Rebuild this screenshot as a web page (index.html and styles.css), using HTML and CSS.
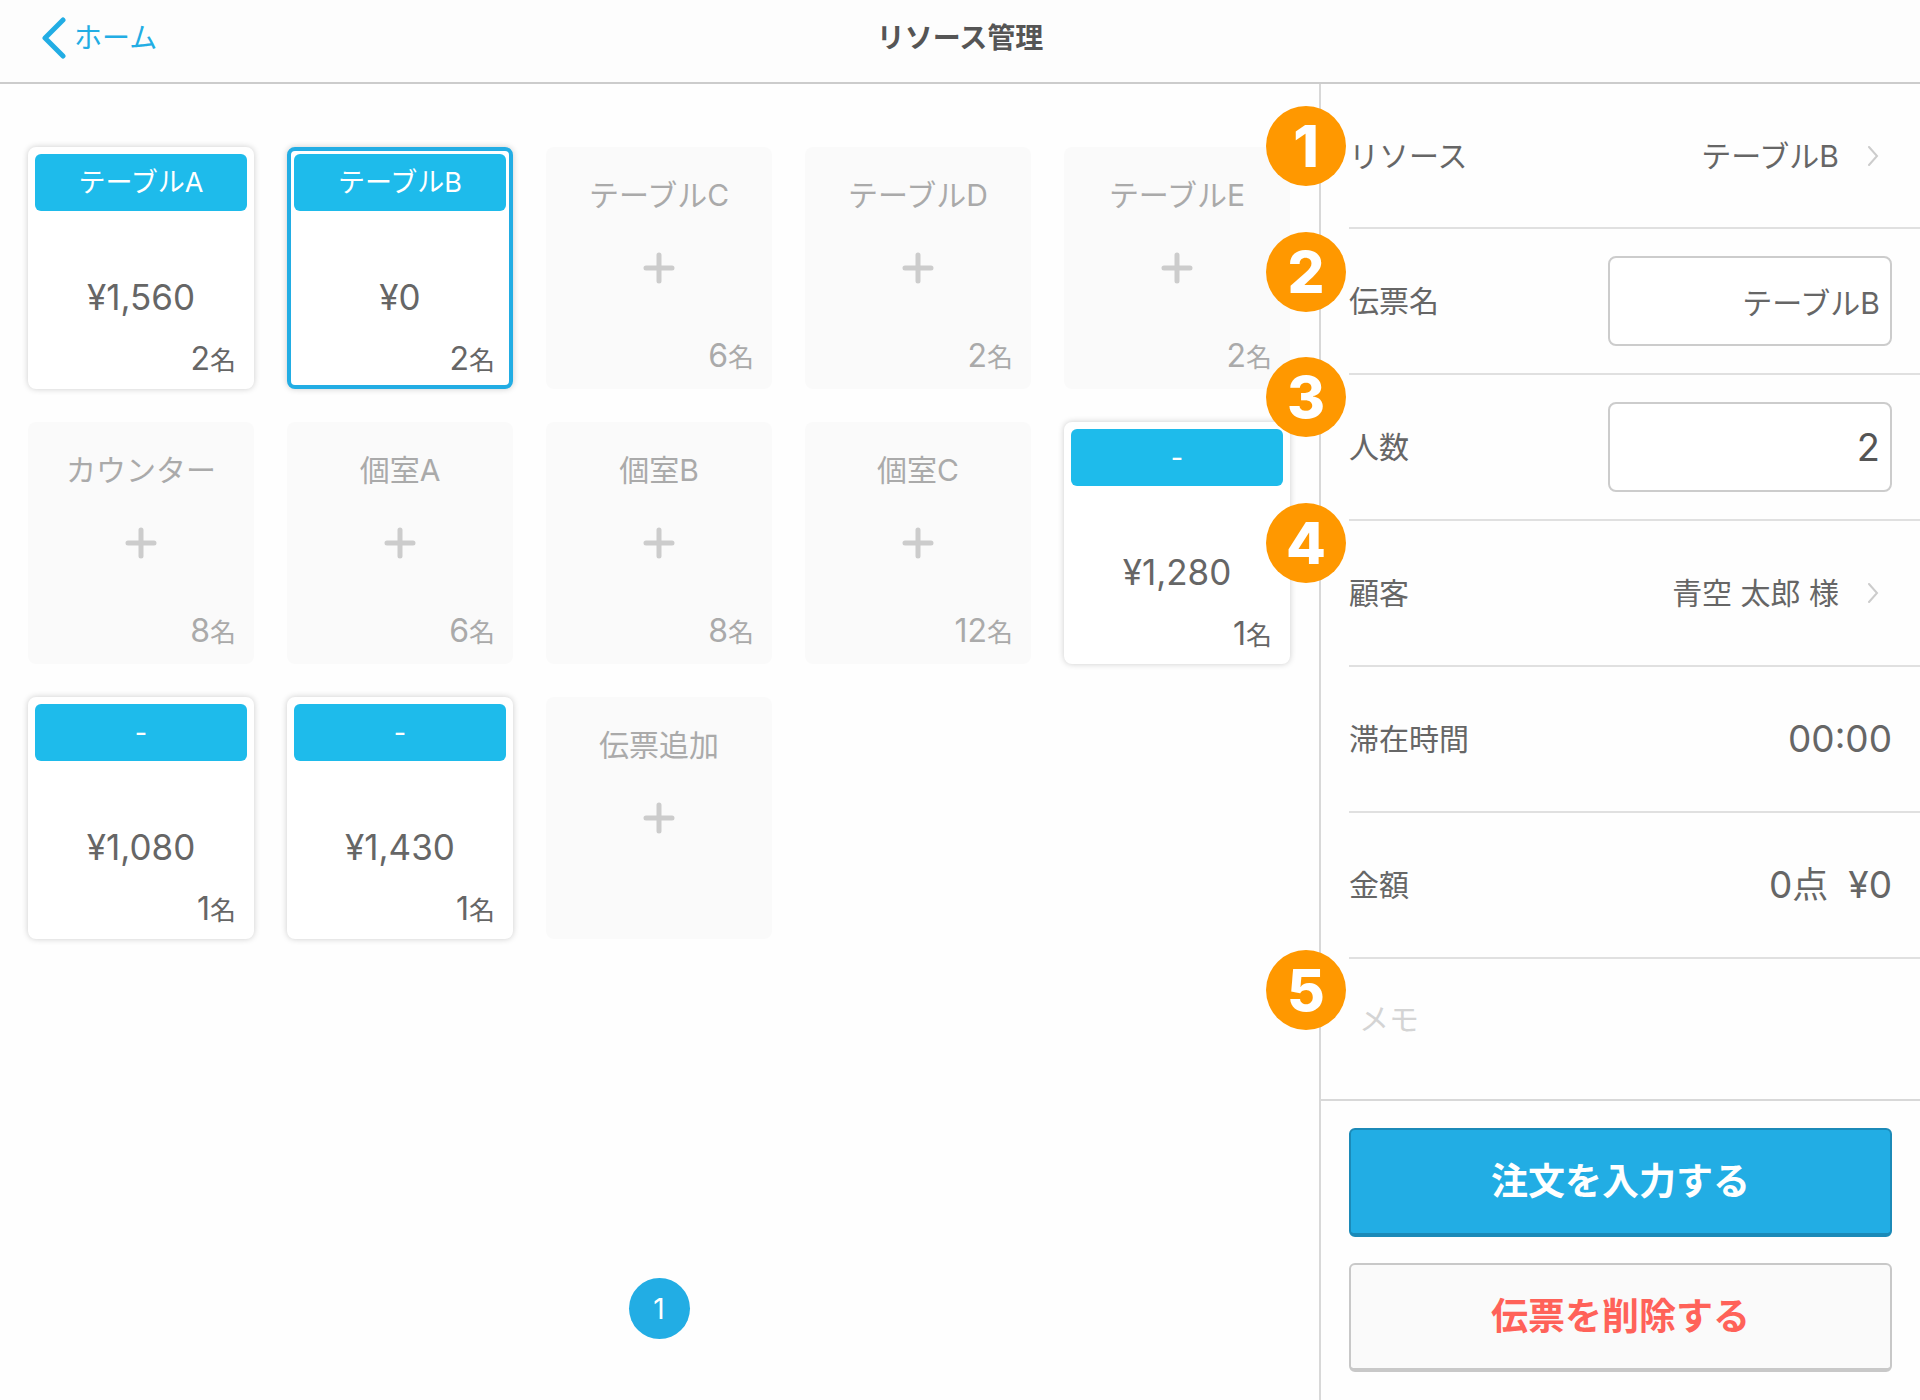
FILE: index.html
```html
<!DOCTYPE html>
<html lang="ja">
<head>
    <meta charset="UTF-8">
    <meta name="viewport" content="width=device-width, initial-scale=1.0">
    <title>リソース管理</title>
    <link rel="stylesheet" href="styles.css">
</head>
<body>

    <svg class="sprite" aria-hidden="true">
        <symbol id="plus" viewBox="0 0 32 32">
            <path d="M16 3v26M3 16h26" fill="none" stroke="currentColor" stroke-width="5" stroke-linecap="round"/>
        </symbol>
        <symbol id="chevron" viewBox="0 0 12 20">
            <path d="M2 1l8 9-8 9" fill="none" stroke="currentColor" stroke-width="2" stroke-linecap="round"/>
        </symbol>
    </svg>

    <header class="header">
        <a class="back" href="#">
            <svg class="back-icon" viewBox="0 0 24 42" aria-hidden="true">
                <path d="M21 3L3 21l18 18" fill="none" stroke="currentColor" stroke-width="5" stroke-linecap="round" stroke-linejoin="round"/>
            </svg>
            <span>ホーム</span>
        </a>
        <h1>リソース管理</h1>
    </header>

    <div class="content">
        <!-- Tables and open slips -->
        <main class="resources">
            <div class="grid">
                <button type="button" class="card open">
                    <span class="tag">テーブルA</span>
                    <span class="amount">¥1,560</span>
                    <span class="count">2<small>名</small></span>
                </button>
                <button type="button" class="card open selected">
                    <span class="tag">テーブルB</span>
                    <span class="amount">¥0</span>
                    <span class="count">2<small>名</small></span>
                </button>
                <button type="button" class="card">
                    <span class="name">テーブルC</span>
                    <svg class="plus"><use href="#plus"/></svg>
                    <span class="count">6<small>名</small></span>
                </button>
                <button type="button" class="card">
                    <span class="name">テーブルD</span>
                    <svg class="plus"><use href="#plus"/></svg>
                    <span class="count">2<small>名</small></span>
                </button>
                <button type="button" class="card">
                    <span class="name">テーブルE</span>
                    <svg class="plus"><use href="#plus"/></svg>
                    <span class="count">2<small>名</small></span>
                </button>
                <button type="button" class="card">
                    <span class="name">カウンター</span>
                    <svg class="plus"><use href="#plus"/></svg>
                    <span class="count">8<small>名</small></span>
                </button>
                <button type="button" class="card">
                    <span class="name">個室A</span>
                    <svg class="plus"><use href="#plus"/></svg>
                    <span class="count">6<small>名</small></span>
                </button>
                <button type="button" class="card">
                    <span class="name">個室B</span>
                    <svg class="plus"><use href="#plus"/></svg>
                    <span class="count">8<small>名</small></span>
                </button>
                <button type="button" class="card">
                    <span class="name">個室C</span>
                    <svg class="plus"><use href="#plus"/></svg>
                    <span class="count">12<small>名</small></span>
                </button>
                <button type="button" class="card open">
                    <span class="tag">-</span>
                    <span class="amount">¥1,280</span>
                    <span class="count">1<small>名</small></span>
                </button>
                <button type="button" class="card open">
                    <span class="tag">-</span>
                    <span class="amount">¥1,080</span>
                    <span class="count">1<small>名</small></span>
                </button>
                <button type="button" class="card open">
                    <span class="tag">-</span>
                    <span class="amount">¥1,430</span>
                    <span class="count">1<small>名</small></span>
                </button>
                <button type="button" class="card">
                    <span class="name">伝票追加</span>
                    <svg class="plus"><use href="#plus"/></svg>
                </button>
            </div>
            <nav class="pager">
                <button type="button" class="page">1</button>
            </nav>
        </main>

        <!-- Details of the selected slip -->
        <aside class="detail">
            <div class="row">
                <span class="step step-1">1</span>
                <span class="label" id="resource-label">リソース</span>
                <button type="button" class="picker" aria-describedby="resource-label">
                    テーブルB
                    <svg class="chevron"><use href="#chevron"/></svg>
                </button>
            </div>
            <div class="row">
                <span class="step step-2">2</span>
                <label class="label" for="slip-name">伝票名</label>
                <input type="text" id="slip-name" value="テーブルB">
            </div>
            <div class="row">
                <span class="step step-3">3</span>
                <label class="label" for="people">人数</label>
                <input type="text" id="people" class="number" inputmode="numeric" value="2">
            </div>
            <div class="row">
                <span class="step step-4">4</span>
                <span class="label" id="customer-label">顧客</span>
                <button type="button" class="picker" aria-describedby="customer-label">
                    青空 太郎 様
                    <svg class="chevron"><use href="#chevron"/></svg>
                </button>
            </div>
            <div class="row">
                <span class="label">滞在時間</span>
                <span class="value">00:00</span>
            </div>
            <div class="row">
                <span class="label">金額</span>
                <span class="value"><span>0<small>点</small></span><span>¥0</span></span>
            </div>
            <div class="memo">
                <span class="step step-5">5</span>
                <textarea aria-label="メモ" placeholder="メモ"></textarea>
            </div>
            <div class="actions">
                <button type="button" class="btn btn-primary">注文を入力する</button>
                <button type="button" class="btn btn-delete">伝票を削除する</button>
            </div>
        </aside>
    </div>

</body>
</html>
```
FILE: styles.css
```css
* {
    box-sizing: border-box;
}
body {
    font-family: Inter, 'Noto Sans CJK JP', sans-serif;
    margin: 0;
    min-height: 100vh;
    display: flex;
    flex-direction: column;
    background-color: #fefefe;
    color: #666666;
    font-size: 30px;
    line-height: 40px;
}
button, input, textarea {
    font: inherit;
    color: inherit;
}
button {
    cursor: pointer;
}
.sprite {
    display: none;
}

/* Header */
.header {
    display: grid;
    grid-template-columns: 1fr auto 1fr;
    align-items: center;
    height: 84px;
    padding: 0 42px 6px;
    border-bottom: 2px solid #cccccc;
    background: #fdfdfd;
    font-size: 28px;
}
.header h1 {
    margin: 0;
    font-size: 28px;
    font-weight: 700;
    color: #555555;
}
.back {
    display: flex;
    align-items: center;
    gap: 8px;
    color: #22ade4;
    text-decoration: none;
}
.back-icon {
    width: 24px;
    height: 42px;
}

.content {
    flex: 1;
    display: grid;
    grid-template-columns: minmax(0, 1319fr) minmax(0, 601fr);
}

/* Resource cards */
.resources {
    display: flex;
    flex-direction: column;
    justify-content: space-between;
    padding: 63px 29px 61px 28px;
}
.grid {
    display: grid;
    grid-template-columns: repeat(5, 1fr);
    gap: 33px;
}
.card {
    display: flex;
    flex-direction: column;
    align-items: center;
    min-width: 0;
    height: 242px;
    padding: 24px 14px 9px;
    border: 4px solid transparent;
    border-radius: 8px;
    background: #fafafa;
    background-clip: border-box;
    color: #aaaaaa;
}
.card.open {
    padding: 3px 3px 6px;
    border-color: #ffffff;
    background: #ffffff;
    color: #666666;
    box-shadow: 0 0 6px rgba(0, 0, 0, 0.2);
}
.card.selected {
    border-color: #22ade4;
}
.tag {
    width: 100%;
    padding: 9px 0 8px;
    border-radius: 6px;
    background: #1ebbeb;
    color: #ffffff;
    font-size: 27px;
}
.amount {
    margin-top: 66px;
    font-size: 35px;
}
.plus {
    width: 32px;
    height: 32px;
    margin-top: 37px;
    color: #cccccc;
}
.count {
    margin-top: auto;
    align-self: flex-end;
    font-size: 32px;
    line-height: 36px;
}
.open .count {
    margin-right: 11px;
}
.count small {
    font-size: 26px;
}
.pager {
    display: flex;
    justify-content: center;
}
.page {
    width: 61px;
    height: 61px;
    padding: 0;
    border: none;
    border-radius: 50%;
    background: #22ade4;
    color: #ffffff;
    font-size: 28px;
}

/* Detail panel */
.detail {
    display: flex;
    flex-direction: column;
    border-left: 2px solid #d8d8d8;
}
.row {
    position: relative;
    display: flex;
    justify-content: space-between;
    align-items: center;
    height: 146px;
    margin-left: 28px;
    padding-right: 28px;
    border-bottom: 2px solid #e0e0e0;
}
.row:first-child {
    height: 145px;
}
.picker {
    display: flex;
    align-items: center;
    gap: 28px;
    padding: 0 13px 0 0;
    border: none;
    background: none;
}
.chevron {
    width: 12px;
    height: 20px;
    color: #cccccc;
}
.row input {
    width: 284px;
    height: 90px;
    padding: 0 10px;
    border: 2px solid #cccccc;
    border-radius: 8px;
    background: #ffffff;
    text-align: right;
}
.row input.number {
    font-size: 38px;
    color: #555555;
}
.value {
    display: flex;
    gap: 20px;
    font-size: 37px;
}
.value small {
    font-size: 36px;
}
.memo {
    position: relative;
    flex: 1;
    display: flex;
    margin-left: 28px;
}
.memo textarea {
    flex: 1;
    min-width: 0;
    padding: 40px 10px 0;
    border: none;
    background: none;
    resize: none;
}
.memo textarea::placeholder {
    color: #d4d4d4;
}

/* Numbered markers over the panel edge */
.step {
    position: absolute;
    left: -83px;
    width: 80px;
    height: 80px;
    border-radius: 50%;
    background: #ff9800;
    color: #ffffff;
    font-size: 58px;
    font-weight: 800;
    line-height: 80px;
    text-align: center;
}
.step-1 {
    top: 22px;
}
.step-2 {
    top: 3px;
}
.step-3, .step-4 {
    top: -18px;
}
.step-5 {
    top: -9px;
}

.actions {
    display: flex;
    flex-direction: column;
    gap: 26px;
    padding: 27px 28px 28px;
    border-top: 2px solid #d8d8d8;
}
.btn {
    height: 109px;
    border: 2px solid #c8c8c8;
    border-bottom-width: 4px;
    border-radius: 6px;
    font-size: 37px;
    font-weight: 700;
}
.btn-primary {
    border-color: #1b8ab8;
    background: #22ade4;
    color: #ffffff;
}
.btn-delete {
    background: #fafafa;
    color: #ff6259;
}
```
